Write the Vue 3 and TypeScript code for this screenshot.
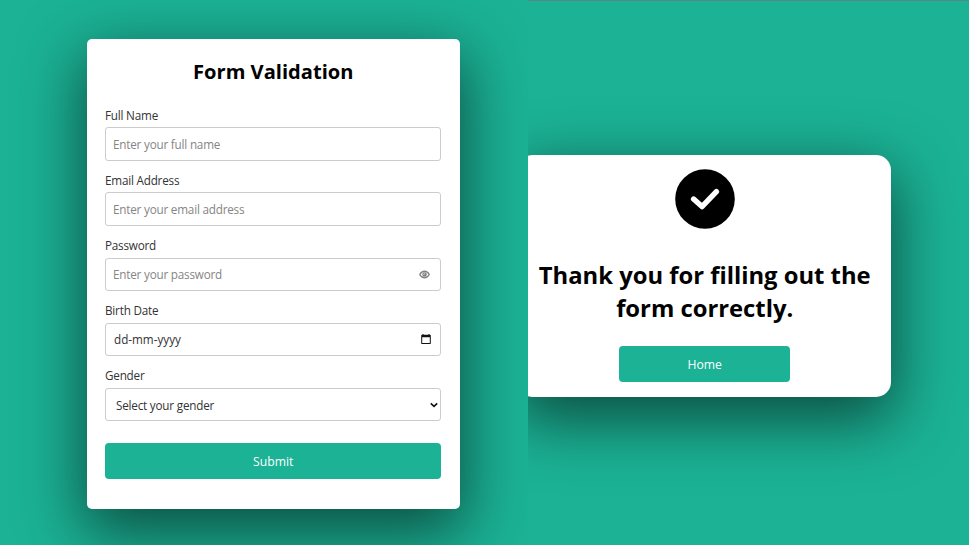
<script setup lang="ts">
interface Field {
  id: string
  label: string
  text: string
  kind: 'text' | 'email' | 'password' | 'date' | 'select'
}

const fields: Field[] = [
  { id: 'name', label: 'Full Name', text: 'Enter your full name', kind: 'text' },
  { id: 'email', label: 'Email Address', text: 'Enter your email address', kind: 'email' },
  { id: 'password', label: 'Password', text: 'Enter your password', kind: 'password' },
  { id: 'birth', label: 'Birth Date', text: 'dd-mm-yyyy', kind: 'date' },
  { id: 'gender', label: 'Gender', text: 'Select your gender', kind: 'select' },
]
</script>

<template>
  <div class="screen">
    <main class="pane form-pane">
      <form class="card" @submit.prevent>
        <h1 class="title">Form Validation</h1>
        <div v-for="f in fields" :key="f.id" class="field">
          <label class="label" :for="f.id">{{ f.label }}</label>
          <div class="control" :class="f.kind">
            <span v-if="f.kind === 'date' || f.kind === 'select'" class="value">{{ f.text }}</span>
            <input v-else :id="f.id" class="input" :type="f.kind" :placeholder="f.text" />
            <svg v-if="f.kind === 'password'" class="eye" viewBox="0 0 22 18">
              <path d="M1.5 9C6 .2 16 .2 20.500 9 16 17.800 6 17.800 1.500 9z" />
              <circle cx="11" cy="9" r="4.500" />
              <path class="glint" d="M8.700 9Q11 9.500 11 6.700" />
            </svg>
            <svg v-if="f.kind === 'date'" class="calendar" viewBox="0 0 10 10">
              <path fill="#111" fill-rule="evenodd" d="M1.5 0h1v.7h5V0h1v.7h.6q.7 0 .7.7v7.900q0 .7-.7.7H.9q-.7 0-.7-.7V1.400q0-.7.7-.7h.6zM1.200 3.200V9h7.600V3.200z" />
            </svg>
            <svg v-if="f.kind === 'select'" class="chevron" viewBox="0 0 8 6">
              <path fill="none" stroke="#111" stroke-width="1.6" d="M.8 1.300 4 4.300l3.200-3" />
            </svg>
          </div>
        </div>
        <button class="button submit" type="submit">Submit</button>
      </form>
    </main>

    <section class="pane thanks-pane">
      <div class="thanks">
        <svg class="check" viewBox="0 0 60 60">
          <circle cx="30" cy="30" r="29.800" />
          <path d="M18.600 30 27 37.600 41.400 22.600" />
        </svg>
        <h2 class="message">Thank you for filling out the form correctly.</h2>
        <button class="button home" type="button">Home</button>
      </div>
    </section>
  </div>
</template>

<style>
body {
  background: #1bb295;
}
</style>

<style scoped>
* {
  box-sizing: border-box;
}

.screen {
  display: flex;
  width: 969px;
  height: 545px;
  overflow: hidden;
  background: #1bb295;
  font-family: "Open Sans", "Noto Sans", sans-serif;
}

.pane {
  overflow: hidden;
}

.form-pane {
  width: 528px;
  padding: 39px 0 0 86.6px;
}

.card {
  display: flex;
  flex-direction: column;
  width: 373.700px;
  height: 469.800px;
  padding: 18px 18.800px 0 18.400px;
  border-radius: 5px;
  background: #fff;
  box-shadow: 0 20px 62px 4px rgba(0, 0, 0, 0.56);
}

.title {
  margin: 0 0 9px;
  color: #000;
  font-size: 20.100px;
  font-weight: 700;
  line-height: 30px;
  text-align: center;
}

.field {
  display: flex;
  flex-direction: column;
  height: 65.100px;
  padding-top: 9.500px;
}

.label {
  height: 21.900px;
  color: #333;
  font-size: 11.700px;
  line-height: 18px;
  letter-spacing: -0.2px;
}

.control {
  display: flex;
  align-items: center;
  justify-content: space-between;
  height: 33.600px;
  padding: 0 10px 0 7px;
  border: 1px solid #ccc;
  border-radius: 3px;
  color: #333;
  font-size: 11.700px;
  letter-spacing: -0.2px;
}

.input {
  flex: 1;
  min-width: 0;
  padding: 0;
  border: 0;
  outline: 0;
  background: none;
  color: #333;
  font: inherit;
  letter-spacing: inherit;
}

.input::placeholder {
  color: #858585;
  opacity: 1;
}

.control.date {
  padding: 0 9.500px 1px 8px;
  letter-spacing: 0;
}

.control.select {
  padding: 0 2px 0 10px;
}

.eye {
  width: 11px;
  height: 9px;
  margin-top: 1px;
  fill: none;
  stroke: #858585;
  stroke-width: 2.800;
}

.eye circle {
  fill: #858585;
  stroke: none;
}

.eye .glint {
  stroke: #fff;
  stroke-width: 1.300;
}

.calendar {
  width: 10px;
  height: 10px;
}

.chevron {
  width: 8px;
  height: 6px;
}

.button {
  padding: 0;
  border: 0;
  border-radius: 4px;
  background: #1bb295;
  color: #fff;
  font: 500 12.200px "Open Sans", "Noto Sans", sans-serif;
}

.submit {
  height: 35.500px;
  margin-top: 22px;
}

.thanks-pane {
  flex: 1;
  padding-top: 153.800px;
  border-top: 1px solid #5b8581;
}

.thanks {
  display: flex;
  flex-direction: column;
  align-items: center;
  width: 373.400px;
  height: 242px;
  margin-left: -10px;
  padding-top: 14px;
  border-radius: 15px;
  background: #fff;
  box-shadow: 0 20px 62px 4px rgba(0, 0, 0, 0.56);
}

.check {
  width: 60px;
  height: 60px;
}

.check path {
  fill: none;
  stroke: #fff;
  stroke-width: 5.400;
  stroke-linecap: round;
  stroke-linejoin: round;
}

.message {
  width: 350px;
  margin: 30.400px 0 21.200px;
  color: #000;
  font-size: 23.800px;
  font-weight: 700;
  line-height: 33px;
  text-align: center;
}

.home {
  width: 171.500px;
  height: 35.500px;
}
</style>
